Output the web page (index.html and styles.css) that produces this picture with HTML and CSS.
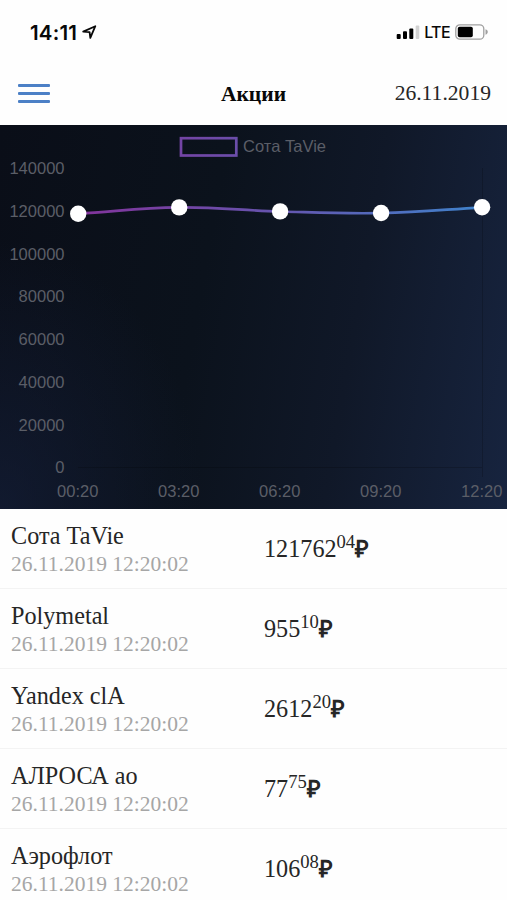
FILE: index.html
```html
<!DOCTYPE html>
<html lang="ru">
<head>
    <meta charset="UTF-8">
    <meta name="viewport" content="width=device-width, initial-scale=1.0">
    <title>Акции</title>
    <link rel="stylesheet" href="styles.css">
</head>
<body>

<div class="status-bar">
    <div class="clock">
        <span class="time">14:11</span>
        <svg class="location" width="15" height="15" viewBox="0 0 15 15">
            <path d="M1.2 6.6 L13.3 1.2 L8.3 12.8 L7.6 7.2 Z"/>
        </svg>
    </div>
    <div class="indicators">
        <svg class="signal" width="24" height="15" viewBox="0 0 24 15">
            <rect x="0.7" y="9" width="4" height="5" rx="1"/>
            <rect x="7" y="6.3" width="4" height="7.7" rx="1"/>
            <rect x="13.3" y="3.5" width="4" height="10.5" rx="1"/>
            <rect class="off" x="19.7" y="0.5" width="3.6" height="13.5" rx="1"/>
        </svg>
        <span class="network">LTE</span>
        <svg class="battery" width="34" height="16" viewBox="0 0 34 16">
            <rect class="shell" x="0.8" y="0.8" width="28" height="14.4" rx="4"/>
            <rect x="2.8" y="2.8" width="15" height="10.4" rx="1.8"/>
            <path class="tip" d="M30.5 5.3 C33.5 6.2 33.5 9.8 30.5 10.7 Z"/>
        </svg>
    </div>
</div>

<header class="header">
    <button class="menu" aria-label="Меню"><span></span><span></span><span></span></button>
    <h1>Акции</h1>
    <span class="date">26.11.2019</span>
</header>

<div class="chart">
    <svg width="507" height="384" viewBox="0 0 507 384">
        <defs>
            <linearGradient id="stroke" gradientUnits="userSpaceOnUse" x1="78" y1="0" x2="482" y2="0">
                <stop offset="0" stop-color="#82339b"/>
                <stop offset="0.5" stop-color="#6555ae"/>
                <stop offset="1" stop-color="#3f83cc"/>
            </linearGradient>
        </defs>

        <!-- legend -->
        <rect class="line" x="181" y="13.2" width="55.3" height="17.3"/>
        <text class="label" x="243" y="27" textLength="83">Сота TaVie</text>

        <!-- y axis -->
        <g class="label y-axis">
            <text x="64.5" y="49">140000</text>
            <text x="64.5" y="91.8">120000</text>
            <text x="64.5" y="134.5">100000</text>
            <text x="64.5" y="177.2">80000</text>
            <text x="64.5" y="220">60000</text>
            <text x="64.5" y="262.8">40000</text>
            <text x="64.5" y="305.5">20000</text>
            <text x="64.5" y="348.2">0</text>
        </g>
        <path class="grid" d="M78 342.5 H482 M482.5 43 V352"/>

        <!-- x axis -->
        <g class="label x-axis">
            <text x="77.7" y="371.5">00:20</text>
            <text x="178.7" y="371.5">03:20</text>
            <text x="279.7" y="371.5">06:20</text>
            <text x="380.7" y="371.5">09:20</text>
            <text x="481.7" y="371.5">12:20</text>
        </g>

        <path class="line" d="M78 88.7 C118 86.3 139 82.8 179 82.4 C219 82 240 85.4 280 86.5 C320 87.6 341 88.8 381 88.1 C421 87.3 442 84.7 482 82.3"/>
        <g class="points">
            <circle cx="78.2" cy="88.7" r="8.2"/>
            <circle cx="179.2" cy="82.4" r="8.2"/>
            <circle cx="280.1" cy="86.4" r="8.2"/>
            <circle cx="381.1" cy="88" r="8.2"/>
            <circle cx="482.1" cy="82.3" r="8.2"/>
        </g>
    </svg>
</div>

<div class="stocks">
    <div class="stock">
        <div class="info">
            <div class="name">Сота TaVie</div>
            <div class="updated">26.11.2019 12:20:02</div>
        </div>
        <div class="price">121762<sup>04</sup><b>₽</b></div>
    </div>
    <div class="stock">
        <div class="info">
            <div class="name">Polymetal</div>
            <div class="updated">26.11.2019 12:20:02</div>
        </div>
        <div class="price">955<sup>10</sup><b>₽</b></div>
    </div>
    <div class="stock">
        <div class="info">
            <div class="name">Yandex clA</div>
            <div class="updated">26.11.2019 12:20:02</div>
        </div>
        <div class="price">2612<sup>20</sup><b>₽</b></div>
    </div>
    <div class="stock">
        <div class="info">
            <div class="name">АЛРОСА ао</div>
            <div class="updated">26.11.2019 12:20:02</div>
        </div>
        <div class="price">77<sup>75</sup><b>₽</b></div>
    </div>
    <div class="stock">
        <div class="info">
            <div class="name">Аэрофлот</div>
            <div class="updated">26.11.2019 12:20:02</div>
        </div>
        <div class="price">106<sup>08</sup><b>₽</b></div>
    </div>
</div>

</body>
</html>
```
FILE: styles.css
```css
* { box-sizing: border-box; }
body { margin: 0; height: 900px; overflow: hidden; background: #fefefe; color: #262626; font-family: 'Liberation Serif', serif; }

/* Status bar */
.status-bar { display: flex; justify-content: space-between; height: 63px; padding: 20px 18px 0 30px; font-family: Inter, sans-serif; color: #080808; }
.clock, .indicators { display: flex; align-items: center; height: 24px; }
.time { font-size: 20.5px; font-weight: 600; letter-spacing: 0.2px; }
.location { margin-left: 5px; fill: none; stroke: #080808; stroke-width: 1.8; stroke-linejoin: round; }
.signal .off { fill: #d2d2d2; }
.network { margin: 0 5px 0 4px; font-size: 16px; font-weight: 500; letter-spacing: -0.6px; }
.battery .shell { fill: none; stroke: #a0a0a0; stroke-width: 1.3; }
.battery .tip { fill: #a0a0a0; }

/* Header */
.header { display: grid; grid-template-columns: 1fr auto 1fr; align-items: center; height: 62px; padding: 0 16px 2px 18px; }
.menu { display: flex; flex-direction: column; gap: 5px; width: 32px; padding: 0; border: none; background: none; }
.menu span { width: 32px; height: 3px; border-radius: 1px; background: #4c80c6; }
h1 { margin: 2px 2px 0 0; font-size: 21.5px; color: #080808; }
.date { justify-self: end; font-size: 21.6px; }

/* Chart */
.chart { height: 384px; background: radial-gradient(ellipse 40% 70% at 0% 100%, rgba(20,30,56,0.7), transparent), linear-gradient(100deg, #0a0e18 0%, #0b121c 40%, #101828 68%, #17243f 100%); }
.chart svg { display: block; }
.label { fill: #5b5e67; font-family: 'Liberation Sans', sans-serif; font-size: 16.5px; }
.y-axis { text-anchor: end; }
.x-axis { text-anchor: middle; }
.grid { fill: none; stroke: rgba(0,0,0,0.18); }
.line { fill: none; stroke: url(#stroke); stroke-width: 2.7; }
.points { fill: #fff; }

/* Stocks */
.stock { display: grid; grid-template-columns: 253px 1fr; align-items: center; height: 79.9px; padding: 2px 11px 0; border-bottom: 1px solid #f3f3f3; }
.name { font-size: 24.2px; line-height: 29px; }
.updated { font-size: 21.5px; line-height: 28px; color: #a6a6a6; }
.price { font-size: 24.2px; line-height: 30px; white-space: nowrap; }
.price sup { font-size: 18.6px; line-height: 0; vertical-align: 9px; }
.price b { font-family: 'Open Sans', sans-serif; font-size: 23.5px; line-height: 0; }
```
